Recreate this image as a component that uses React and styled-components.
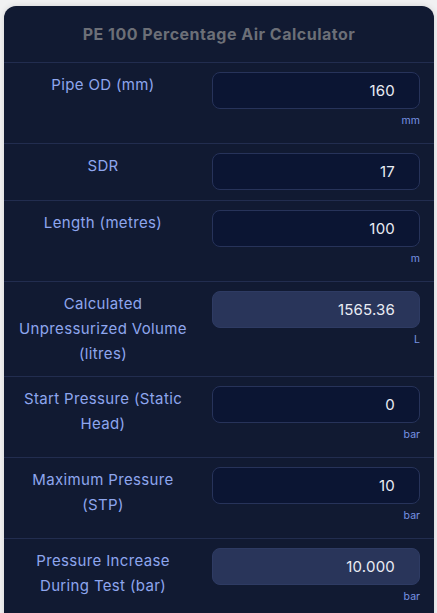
import React from "react";
import styled, { createGlobalStyle } from "styled-components";

const Global = createGlobalStyle`
  html, body { margin: 0; padding: 0; background: #f1f1f2; }
  body { font-family: Inter, "Open Sans", sans-serif; }
  * { box-sizing: border-box; }
`;

const Card = styled.div`
  margin: 6px 0 0 4px;
  width: 430px;
  background: #111a32;
  border-radius: 12px 12px 0 0;
  box-shadow: 0 0 6px rgba(0, 0, 0, 0.12);
  overflow: hidden;
`;

const Header = styled.div`
  height: 57px;
  display: flex;
  align-items: center;
  justify-content: center;
  border-bottom: 1px solid #222d4f;
`;

const Title = styled.h1`
  margin: 0;
  font-size: 16px;
  font-weight: 700;
  color: #6c6f77;
  letter-spacing: 0.5px;
`;

const Row = styled.div`
  display: grid;
  grid-template-columns: 170px 208px;
  column-gap: 24px;
  padding: 9px 14px 10px;
  border-bottom: ${(p) => (p.$last ? "none" : "1px solid #222d4f")};
`;

const Label = styled.div`
  text-align: center;
  font-size: 15px;
  line-height: 25px;
  letter-spacing: 0.35px;
  color: #8ea6ee;
`;

const Field = styled.div`
  display: flex;
  flex-direction: column;
`;

const Input = styled.input`
  width: 100%;
  height: 37px;
  border-radius: 8px;
  border: 1px solid ${(p) => (p.readOnly ? "#2e3b63" : "#27335a")};
  background: ${(p) => (p.readOnly ? "#29355a" : "#0b1533")};
  color: #e9ecf4;
  font-family: inherit;
  font-size: 15px;
  letter-spacing: 0.2px;
  text-align: right;
  padding: 0 24px 0 12px;
  outline: none;
`;

const Unit = styled.div`
  text-align: right;
  font-size: 10.5px;
  line-height: 20px;
  margin: 2px 0 2px;
  color: #7893e3;
`;

const fields = [
  { label: "Pipe OD (mm)", value: "160", unit: "mm" },
  { label: "SDR", value: "17" },
  { label: "Length (metres)", value: "100", unit: "m" },
  { label: "Calculated Unpressurized Volume (litres)", value: "1565.36", unit: "L", ro: true },
  { label: "Start Pressure (Static Head)", value: "0", unit: "bar" },
  { label: "Maximum Pressure (STP)", value: "10", unit: "bar" },
  { label: "Pressure Increase During Test (bar)", value: "10.000", unit: "bar", ro: true },
];

export default function App() {
  return (
    <>
      <Global />
      <Card>
        <Header>
          <Title>PE 100 Percentage Air Calculator</Title>
        </Header>
        {fields.map((f, i) => (
          <Row key={f.label} $last={i === fields.length - 1}>
            <Label>{f.label}</Label>
            <Field>
              <Input defaultValue={f.value} readOnly={!!f.ro} />
              {f.unit && <Unit>{f.unit}</Unit>}
            </Field>
          </Row>
        ))}
      </Card>
    </>
  );
}
